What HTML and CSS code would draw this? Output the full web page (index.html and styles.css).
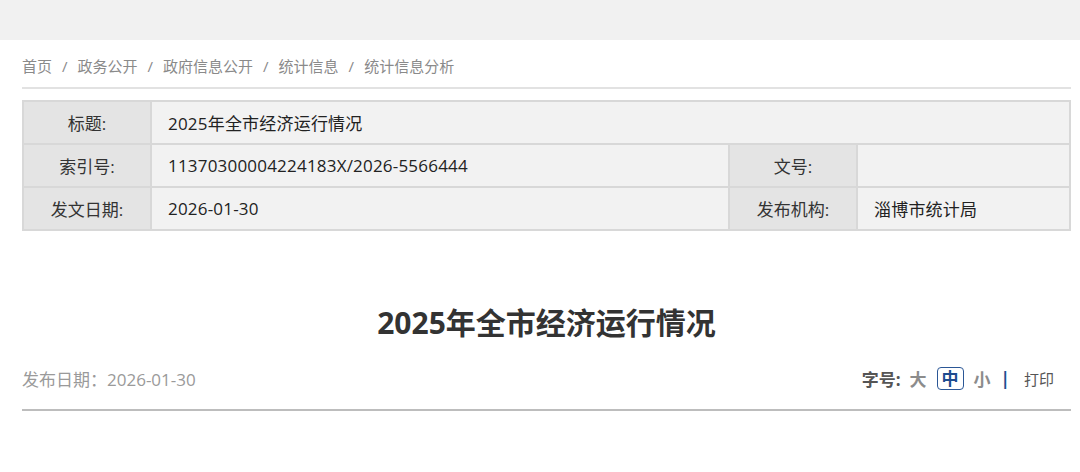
FILE: index.html
```html
<!DOCTYPE html>
<html lang="zh-CN">
<head>
<meta charset="utf-8">
<title>2025年全市经济运行情况</title>
<link rel="stylesheet" href="styles.css">
</head>
<body>
<div class="topbar"></div>
<div class="page">
  <nav class="crumbs">
    <a>首页</a><span class="sep">/</span><a>政务公开</a><span class="sep">/</span><a>政府信息公开</a><span class="sep">/</span><a>统计信息</a><span class="sep">/</span><a>统计信息分析</a>
  </nav>
  <table class="meta">
    <colgroup>
      <col class="c-label"><col class="c-value"><col class="c-label"><col>
    </colgroup>
    <tr>
      <th>标题:</th>
      <td colspan="3">2025年全市经济运行情况</td>
    </tr>
    <tr>
      <th>索引号:</th>
      <td>11370300004224183X/2026-5566444</td>
      <th>文号:</th>
      <td></td>
    </tr>
    <tr>
      <th>发文日期:</th>
      <td>2026-01-30</td>
      <th>发布机构:</th>
      <td>淄博市统计局</td>
    </tr>
  </table>
  <h1 class="title">2025年全市经济运行情况</h1>
  <div class="info">
    <span class="pubdate">发布日期：2026-01-30</span>
    <div class="tools">
      <span class="fs-label">字号:</span>
      <span class="fs">大</span>
      <span class="fs active">中</span>
      <span class="fs">小</span>
      <span class="bar">|</span>
      <span class="print">打印</span>
    </div>
  </div>
</div>
</body>
</html>
```

FILE: styles.css
```css
* { box-sizing: border-box; }
html, body { margin: 0; padding: 0; background: #fff; }
body {
  font-family: "Open Sans", "Noto Sans CJK SC", sans-serif;
  color: #333;
}
.topbar { height: 40px; background: #f1f1f1; }
.page { padding: 0 9px 0 22px; }
.crumbs {
  height: 49px;
  padding-top: 14px;
  font-size: 15px;
  line-height: 24px;
  color: #8a8a8a;
  border-bottom: 2px solid #e2e2e2;
}
.crumbs .sep { padding: 0 10px; }
.meta {
  margin-top: 11px;
  width: 100%;
  border-collapse: collapse;
  table-layout: fixed;
  font-size: 17px;
  border: 1px solid #d6d6d6;
}
.meta .c-label { width: 128px; }
.meta .c-value { width: 578px; }
.meta th, .meta td {
  height: 43px;
  border: 2px solid #d8d8d8;
  padding: 0;
  font-weight: normal;
}
.meta th { background: #e4e4e4; text-align: center; color: #333; }
.meta td { background: #f2f2f2; text-align: left; padding-left: 16px; color: #222; letter-spacing: 0.2px; }
.title {
  margin: 66px 0 0;
  text-align: center;
  font-size: 30px;
  line-height: 52px;
  font-weight: bold;
  color: #333;
}
.info {
  display: flex;
  justify-content: space-between;
  align-items: center;
  height: 54px;
  margin-top: 8px;
  padding-right: 17px;
  border-bottom: 2px solid #bdbdbd;
  padding-bottom: 10px;
}
.pubdate { font-size: 17px; color: #9a9a9a; }
.tools { display: flex; align-items: center; font-size: 17px; }
.fs-label { font-weight: bold; color: #555; margin-right: 9px; }
.fs { font-weight: bold; color: #8c8c8c; margin-right: 10px; }
.fs.active {
  color: #1e4c8f;
  border: 1px solid #2b5796;
  border-radius: 4px;
  padding: 1px 4px;
  line-height: 19px;
}
.bar { color: #1e4c8f; margin: 0 14px 0 0; font-weight: bold; }
.print { font-size: 15px; color: #555; }
```
